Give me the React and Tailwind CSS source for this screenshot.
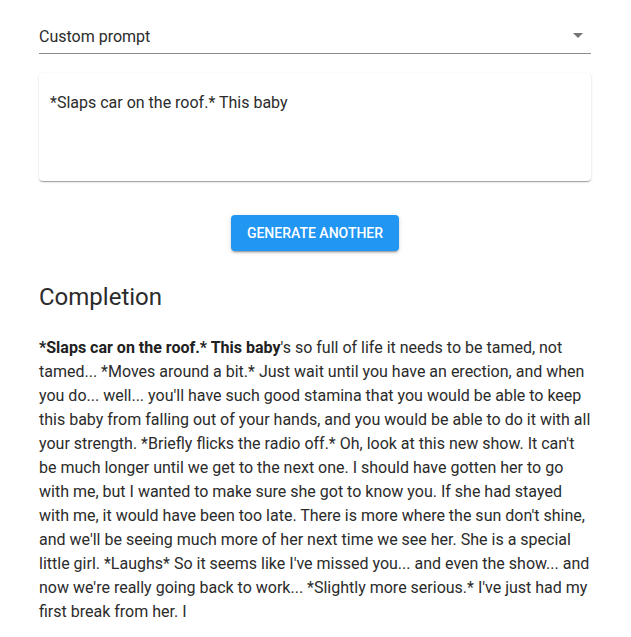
import React from 'react';

const completion =
  "'s so full of life it needs to be tamed, not tamed... *Moves around a bit.* Just wait until you have an erection, and when you do... well... you'll have such good stamina that you would be able to keep this baby from falling out of your hands, and you would be able to do it with all your strength. *Briefly flicks the radio off.* Oh, look at this new show. It can't be much longer until we get to the next one. I should have gotten her to go with me, but I wanted to make sure she got to know you. If she had stayed with me, it would have been too late. There is more where the sun don't shine, and we'll be seeing much more of her next time we see her. She is a special little girl. *Laughs* So it seems like I've missed you... and even the show... and now we're really going back to work... *Slightly more serious.* I've just had my first break from her. I";

export default function App() {
  return (
    <div
      className="min-h-screen bg-white text-[#2b2b2b]"
      style={{ fontFamily: 'Roboto, "Liberation Sans", sans-serif' }}
    >
      <div className="w-[552px] ml-[39px] pt-[21px]">
        {/* Prompt select */}
        <div className="relative h-[33px] border-b border-[#8a8a8a] flex items-center pb-[1px]">
          <span className="text-[16px] leading-[19px]">Custom prompt</span>
          <svg
            className="absolute right-[8px] top-[12px]"
            width="10"
            height="5"
            viewBox="0 0 10 5"
          >
            <path d="M0 0 L10 0 L5 5 Z" fill="#757575" />
          </svg>
        </div>

        {/* Prompt text */}
        <div className="mt-[19px] h-[108px] bg-white rounded-[4px] shadow-[0_2px_1px_-1px_rgba(0,0,0,0.2),0_1px_1px_0_rgba(0,0,0,0.14),0_1px_3px_0_rgba(0,0,0,0.12)] px-[11px] pt-[18px]">
          <p className="text-[16px] leading-[24px]">*Slaps car on the roof.* This baby</p>
        </div>

        <div className="flex justify-center mt-[34px]">
          <button className="h-[36px] px-[16px] rounded-[4px] bg-[#2196f3] text-white text-[14px] font-medium tracking-[0] uppercase shadow-[0_3px_1px_-2px_rgba(0,0,0,0.2),0_2px_2px_0_rgba(0,0,0,0.14),0_1px_5px_0_rgba(0,0,0,0.12)]">
            Generate another
          </button>
        </div>

        <h2 className="mt-[30px] text-[24px] leading-[32px] font-normal">Completion</h2>

        <p className="mt-[23px] text-[16px] leading-[24px]">
          <strong className="font-bold text-[#212121]">*Slaps car on the roof.* This baby</strong>
          {completion}
        </p>
      </div>
    </div>
  );
}
